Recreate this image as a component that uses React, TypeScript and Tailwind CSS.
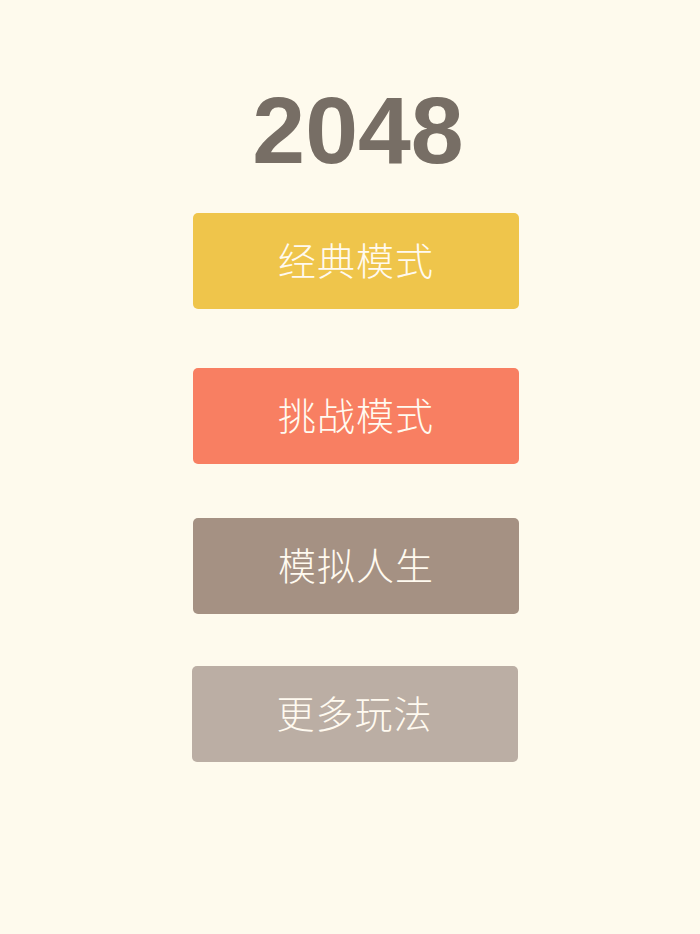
const modes = [
  { label: "经典模式", bg: "bg-[#efc54b]", box: "mt-[35px]" },
  { label: "挑战模式", bg: "bg-[#f87f62]", box: "mt-[59px]" },
  { label: "模拟人生", bg: "bg-[#a59183]", box: "mt-[54px]" },
  { label: "更多玩法", bg: "bg-[#bbaea4]", box: "mt-[52px] mr-[3px]" },
];

export default function App() {
  return (
    <main className="min-h-[934px] w-full bg-[#fefaed] flex flex-col items-center pt-[83px] pl-[12px]">
      <h1 className="text-[95px] leading-none font-bold text-[#776e65] font-['Liberation_Sans',Arial,sans-serif] ml-[4px]">
        2048
      </h1>
      {modes.map((m) => (
        <button
          key={m.label}
          className={`${m.box} ${m.bg} w-[326px] h-[96px] rounded-[5px] flex items-center justify-center pb-[6px] text-[38px] font-light text-[#fffaf0] font-['Noto_Sans_CJK_SC','Noto_Sans',sans-serif] tracking-[1px]`}
        >
          {m.label}
        </button>
      ))}
    </main>
  );
}
